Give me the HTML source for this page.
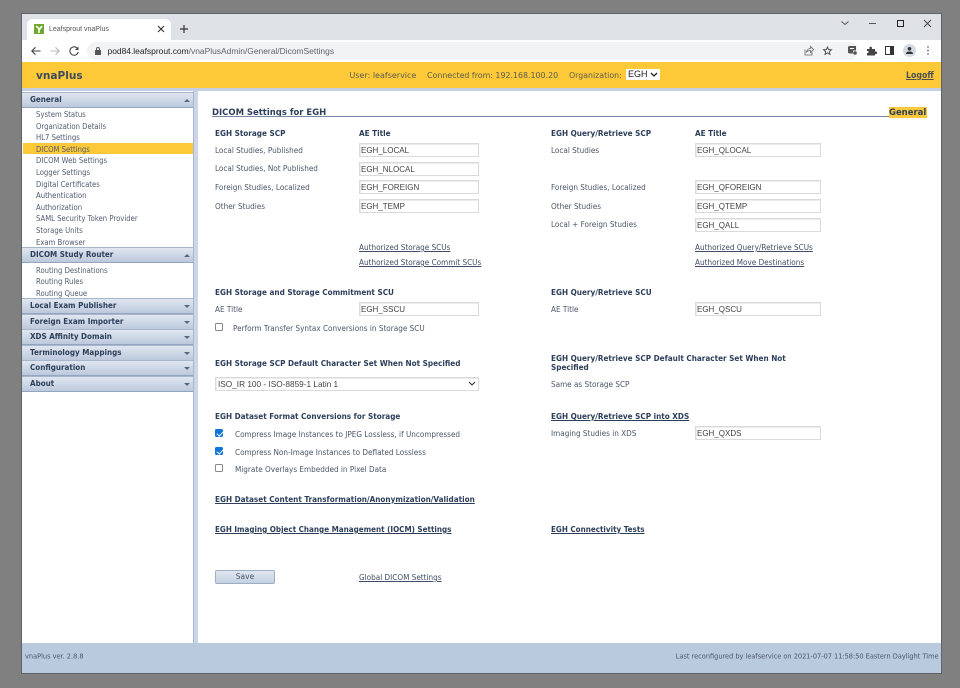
<!DOCTYPE html>
<html><head><meta charset="utf-8"><title>vnaPlus</title>
<style>
html,body{margin:0;padding:0;width:960px;height:688px;overflow:hidden;background:#808080}
*{box-sizing:border-box}
#w{position:absolute;left:0;top:0;width:960px;height:688px;filter:blur(.25px)}
.a,.t,.b,.l,.i,.n,.h{position:absolute;white-space:nowrap}
.t,.b,.l,.n,.h{font-family:"DejaVu Sans",Verdana,sans-serif;font-size:8px;line-height:12px;height:12px}
.t,.b,.l,.n{transform-origin:left center;transform:translateY(1px) scaleX(.91)}
.n{transform:translateY(1px) scaleX(.86)}
.t{color:#4b5668}
.b{color:#2c3e5a;font-weight:bold}
.l{color:#3f4d66;text-decoration:underline}
.i{height:14px;border:1px solid #dadada;box-shadow:inset 1px 1px 0 #ececec;background:#fff;font-family:"Liberation Sans",sans-serif;font-size:8px;line-height:14px;color:#444;padding-left:1px;overflow:hidden}
.n{left:36px;color:#505b70}
.h{left:22px;width:171px;height:16px;line-height:14px;background:linear-gradient(#e0e6f0,#bcc9dc);border-top:1px solid #a8b6cc;border-bottom:1px solid #93a5c0;padding-left:8px;color:#2c3e5a;font-weight:bold}
.h span{display:inline-block;transform-origin:left center;transform:scaleX(.9)}
.h:after{content:"";position:absolute;right:3px;top:6px;border-left:3px solid transparent;border-right:3px solid transparent;border-top:3px solid #54688a}
.h.o:after{border-top:0;border-bottom:3px solid #54688a}
.cb{position:absolute;width:8px;height:8px;border:1px solid #888;border-radius:1.5px;background:#fff}
.cb.c{background:#0f76d8;border-color:#0f76d8}
.cb.c:after{content:"";position:absolute;left:1.7px;top:-.2px;width:2.5px;height:5px;border:solid #fff;border-width:0 1.3px 1.3px 0;transform:rotate(42deg)}
svg{position:absolute}
</style></head><body><div id="w">
<div class="a" style="left:22px;top:14px;width:919px;height:659px;background:#fff;box-shadow:0 0 0 1px #5f6368"></div>
<div class="a" style="left:22px;top:14px;width:919px;height:26px;background:#dee1e6"></div>
<div class="a" style="left:27px;top:19px;width:144px;height:21px;background:#fff;border-radius:6px 6px 0 0"></div>
<svg style="left:34px;top:24px" width="10" height="10" viewBox="0 0 10 10"><rect width="10" height="10" fill="#6fa82e"/><path d="M2 2 L5 4.5 L5 9 M8 2 L5 6" stroke="#fff" stroke-width="1.6" fill="none"/></svg>
<div class="a" style="left:49px;top:24px;font:7px/12px 'Liberation Sans',sans-serif;color:#555">Leafsprout vnaPlus</div>
<svg style="left:157px;top:25px" width="8" height="8" viewBox="0 0 8 8"><path d="M1 1L7 7M7 1L1 7" stroke="#333" stroke-width="1.1"/></svg>
<svg style="left:179px;top:24px" width="10" height="10" viewBox="0 0 10 10"><path d="M5 1V9M1 5H9" stroke="#333" stroke-width="1.2"/></svg>
<svg style="left:840px;top:18px" width="10" height="10" viewBox="0 0 10 10"><path d="M1.500 3.500L5 6.500L8.500 3.500" stroke="#555" fill="none"/></svg>
<div class="a" style="left:869px;top:23px;width:7px;height:1px;background:#555"></div>
<div class="a" style="left:897px;top:20px;width:7px;height:7px;border:1px solid #222"></div>
<svg style="left:923px;top:19px" width="9" height="9" viewBox="0 0 9 9"><path d="M1 1L8 8M8 1L1 8" stroke="#444" stroke-width=".9"/></svg>
<div class="a" style="left:87px;top:42px;width:771px;height:18px;border-radius:9px;background:#f1f3f4"></div>
<svg style="left:30px;top:45px" width="12" height="12" viewBox="0 0 12 12"><path d="M10.500 6H1.800M5.500 2.300L1.800 6L5.500 9.700" stroke="#444" stroke-width="1.100" fill="none"/></svg>
<svg style="left:49px;top:45px" width="12" height="12" viewBox="0 0 12 12"><path d="M1.500 6H10.200M6.500 2.300L10.200 6L6.500 9.700" stroke="#b5b8bc" stroke-width="1.100" fill="none"/></svg>
<svg style="left:68px;top:45px" width="12" height="12" viewBox="0 0 12 12"><path d="M9.800 4A4.200 4.200 0 1 0 10.200 7" stroke="#444" stroke-width="1.100" fill="none"/><path d="M10.500 1.500V5H7Z" fill="#444"/></svg>
<svg style="left:94px;top:46px" width="8" height="10" viewBox="0 0 8 10"><rect x="1" y="4" width="6" height="5" rx=".6" fill="#555"/><path d="M2.500 4V3A1.500 1.500 0 0 1 5.500 3V4" stroke="#555" fill="none"/></svg>
<div class="a" style="left:107.500px;top:45px;font:8.450px/12px 'Liberation Sans',sans-serif;color:#222">pod84.leafsprout.com<span style="color:#5f6368">/vnaPlusAdmin/General/DicomSettings</span></div>
<svg style="left:803px;top:45px" width="11" height="11" viewBox="0 0 11 11"><path d="M2 4.500V10H9V7M3.500 7C4 4.500 6 3.500 7.500 3.500V1.500L10.500 4.500L7.500 7.500V5.500C6 5.500 4.500 6 3.500 7Z" stroke="#666" stroke-width=".8" fill="none"/></svg>
<svg style="left:822px;top:45px" width="11" height="11" viewBox="0 0 11 11"><path d="M5.500 2L6.600 4.600L9.500 4.800L7.300 6.600L8 9.400L5.500 7.900L3 9.400L3.700 6.600L1.500 4.800L4.400 4.600Z" stroke="#444" stroke-width=".9" fill="none"/></svg>
<svg style="left:847px;top:45px" width="11" height="11" viewBox="0 0 11 11"><path d="M1 2.500Q1 1 2.500 1H9V5.500H6V8.500H3Q1 8.500 1 7Z" fill="#555"/><circle cx="8" cy="8" r="1.800" fill="#555"/><rect x="3" y="3" width="4" height="1" fill="#fff"/></svg>
<svg style="left:866px;top:45px" width="11" height="11" viewBox="0 0 11 11"><path d="M1 4H3.500V2.800A1.200 1.200 0 0 1 5.900 2.800V4H9V6.500H10A1.200 1.200 0 0 1 10 9H9V10.500H1V8H2A1.200 1.200 0 0 0 2 6H1Z" fill="#444"/></svg>
<div class="a" style="left:885px;top:46px;width:9px;height:9px;border:1px solid #333;border-right-width:4px"></div>
<div class="a" style="left:903px;top:44px;width:13px;height:13px;border-radius:50%;background:#d3dae6"></div>
<svg style="left:905px;top:46px" width="9" height="9" viewBox="0 0 9 9"><circle cx="4.500" cy="2.800" r="1.800" fill="#333"/><path d="M1 8Q1 5.500 4.500 5.500T8 8Z" fill="#333"/></svg>
<svg style="left:926px;top:46px" width="4" height="9" viewBox="0 0 4 9"><circle cx="2" cy="1" r=".8" fill="#444"/><circle cx="2" cy="4.500" r=".8" fill="#444"/><circle cx="2" cy="8" r=".8" fill="#444"/></svg>
<div class="a" style="left:22px;top:62px;width:919px;height:26px;background:#fdc938"></div>
<div class="a" style="left:22px;top:88px;width:919px;height:3px;background:#c4d0e2"></div>
<div class="t" style="left:36px;top:69px;font-size:11px;font-weight:bold;color:#3d4a5e;transform:translateY(1px) scaleX(.96)">vnaPlus</div>
<div class="t" style="left:349.500px;top:69px;color:#5b5b50;transform:translateY(1px)">User: leafservice</div>
<div class="t" style="left:426.500px;top:69px;color:#5b5b50;transform:translateY(1px) scaleX(.985)">Connected from: 192.168.100.20</div>
<div class="t" style="left:569px;top:69px;color:#5b5b50;transform:translateY(1px) scaleX(.98)">Organization:</div>
<div class="a" style="left:626px;top:69px;width:34px;height:11px;background:#fff;font:9px/11px 'Liberation Sans',sans-serif;color:#222;padding-left:2px">EGH</div>
<svg style="left:650px;top:72px" width="8" height="5" viewBox="0 0 8 5"><path d="M1 1L4 4L7 1" stroke="#222" stroke-width="1.300" fill="none"/></svg>
<div class="l" style="left:905.500px;top:69px;font-size:9px;font-weight:bold;color:#4b4f55;transform:translateY(1px) scaleX(.87)">Logoff</div>

<div class="a" style="left:193px;top:91px;width:5px;height:552px;background:#cdd6e8;border-left:1px solid #a9b5ca"></div>
<div class="a" style="left:22px;top:91px;width:171px;height:552px;background:#fff"></div>

<div class="h o" style="top:92px"><span>General</span></div>
<div class="n" style="top:108px">System Status</div>
<div class="n" style="top:120px">Organization Details</div>
<div class="n" style="top:131px">HL7 Settings</div>
<div class="a" style="left:23px;top:143px;width:170px;height:11px;background:#fdc938"></div>
<div class="n" style="top:143px">DICOM Settings</div>
<div class="n" style="top:154px">DICOM Web Settings</div>
<div class="n" style="top:166px">Logger Settings</div>
<div class="n" style="top:177.500px">Digital Certificates</div>
<div class="n" style="top:189px">Authentication</div>
<div class="n" style="top:201px">Authorization</div>
<div class="n" style="top:212px">SAML Security Token Provider</div>
<div class="n" style="top:224px">Storage Units</div>
<div class="n" style="top:235.500px">Exam Browser</div>
<div class="h o" style="top:247px"><span>DICOM Study Router</span></div>
<div class="n" style="top:263.500px">Routing Destinations</div>
<div class="n" style="top:275px">Routing Rules</div>
<div class="n" style="top:286.500px">Routing Queue</div>
<div class="h" style="top:298px"><span>Local Exam Publisher</span></div>
<div class="h" style="top:314px"><span>Foreign Exam Importer</span></div>
<div class="h" style="top:329px"><span>XDS Affinity Domain</span></div>
<div class="h" style="top:345px"><span>Terminology Mappings</span></div>
<div class="h" style="top:360px"><span>Configuration</span></div>
<div class="h" style="top:376px"><span>About</span></div>

<div class="b" style="left:212px;top:106px;font-size:9px;transform:translateY(1px) scaleX(.94)">DICOM Settings for EGH</div>
<div class="a" style="left:212px;top:116px;width:715px;height:1px;background:#7888a2"></div>
<div class="a" style="left:889px;top:107px;width:38px;height:11px;background:#fdc938"></div>
<div class="b" style="left:889px;top:106px;font-size:9px;transform:translateY(1px) scaleX(.94)">General</div>

<div class="b" style="left:215px;top:127px">EGH Storage SCP</div>
<div class="b" style="left:359px;top:127px">AE Title</div>
<div class="t" style="left:215px;top:144px">Local Studies, Published</div>
<div class="i" style="left:359px;top:143px;width:120px">EGH_LOCAL</div>
<div class="t" style="left:215px;top:162px">Local Studies, Not Published</div>
<div class="i" style="left:359px;top:162px;width:120px">EGH_NLOCAL</div>
<div class="t" style="left:215px;top:181px">Foreign Studies, Localized</div>
<div class="i" style="left:359px;top:180px;width:120px">EGH_FOREIGN</div>
<div class="t" style="left:215px;top:200px">Other Studies</div>
<div class="i" style="left:359px;top:199px;width:120px">EGH_TEMP</div>
<div class="l" style="left:359px;top:241px">Authorized Storage SCUs</div>
<div class="l" style="left:359px;top:256px">Authorized Storage Commit SCUs</div>

<div class="b" style="left:551px;top:127px">EGH Query/Retrieve SCP</div>
<div class="b" style="left:695px;top:127px">AE Title</div>
<div class="t" style="left:551px;top:144px">Local Studies</div>
<div class="i" style="left:695px;top:143px;width:126px">EGH_QLOCAL</div>
<div class="t" style="left:551px;top:181px">Foreign Studies, Localized</div>
<div class="i" style="left:695px;top:180px;width:126px">EGH_QFOREIGN</div>
<div class="t" style="left:551px;top:200px">Other Studies</div>
<div class="i" style="left:695px;top:199px;width:126px">EGH_QTEMP</div>
<div class="t" style="left:551px;top:218px">Local + Foreign Studies</div>
<div class="i" style="left:695px;top:218px;width:126px">EGH_QALL</div>
<div class="l" style="left:695px;top:241px">Authorized Query/Retrieve SCUs</div>
<div class="l" style="left:695px;top:256px">Authorized Move Destinations</div>

<div class="b" style="left:215px;top:286px">EGH Storage and Storage Commitment SCU</div>
<div class="t" style="left:215px;top:303px">AE Title</div>
<div class="i" style="left:359px;top:302px;width:120px">EGH_SSCU</div>
<div class="cb" style="left:215px;top:323px"></div>
<div class="t" style="left:233px;top:322px">Perform Transfer Syntax Conversions in Storage SCU</div>
<div class="b" style="left:215px;top:357px">EGH Storage SCP Default Character Set When Not Specified</div>
<div class="i" style="left:215px;top:377px;width:264px;padding-left:2px;font-size:8.250px">ISO_IR 100 - ISO-8859-1 Latin 1</div>
<svg style="left:468px;top:381px" width="8" height="5" viewBox="0 0 8 5"><path d="M1 1L4 4L7 1" stroke="#333" stroke-width="1.100" fill="none"/></svg>
<div class="b" style="left:215px;top:410px">EGH Dataset Format Conversions for Storage</div>
<div class="cb c" style="left:215px;top:429px"></div>
<div class="t" style="left:235px;top:428px">Compress Image Instances to JPEG Lossless, if Uncompressed</div>
<div class="cb c" style="left:215px;top:447px"></div>
<div class="t" style="left:235px;top:446px">Compress Non-Image Instances to Deflated Lossless</div>
<div class="cb" style="left:215px;top:464px"></div>
<div class="t" style="left:235px;top:463px">Migrate Overlays Embedded in Pixel Data</div>

<div class="b" style="left:551px;top:286px">EGH Query/Retrieve SCU</div>
<div class="t" style="left:551px;top:303px">AE Title</div>
<div class="i" style="left:695px;top:302px;width:126px">EGH_QSCU</div>
<div class="b" style="left:551px;top:352px">EGH Query/Retrieve SCP Default Character Set When Not</div>
<div class="b" style="left:551px;top:361px">Specified</div>
<div class="t" style="left:551px;top:378px">Same as Storage SCP</div>
<div class="b" style="left:551px;top:410px;text-decoration:underline">EGH Query/Retrieve SCP into XDS</div>
<div class="t" style="left:551px;top:427px">Imaging Studies in XDS</div>
<div class="i" style="left:695px;top:426px;width:126px">EGH_QXDS</div>

<div class="b" style="left:215px;top:493px;text-decoration:underline">EGH Dataset Content Transformation/Anonymization/Validation</div>
<div class="b" style="left:215px;top:523px;text-decoration:underline;transform:translateY(1px) scaleX(.9)">EGH Imaging Object Change Management (IOCM) Settings</div>
<div class="b" style="left:551px;top:523px;text-decoration:underline;transform:translateY(1px) scaleX(.9)">EGH Connectivity Tests</div>

<div class="a" style="left:215px;top:570px;width:60px;height:14px;background:linear-gradient(#e0e6f0,#c5d0e2);border:1px solid #a0aec4;border-radius:2px;font:7.500px/12px 'DejaVu Sans',sans-serif;color:#4b5668;text-align:center">Save</div>
<div class="l" style="left:359px;top:571px">Global DICOM Settings</div>

<div class="a" style="left:22px;top:643px;width:919px;height:30px;background:#b9c9de"></div>
<div class="t" style="left:25px;top:650px;font-size:7px;transform:translateY(.5px) scaleX(.94)">vnaPlus ver. 2.8.8</div>
<div class="t" style="right:21px;top:650px;font-size:7px;transform-origin:right center;transform:translateY(.5px) scaleX(.94)">Last reconfigured by leafservice on 2021-07-07 11:58:50 Eastern Daylight Time</div>
</div></body></html>
